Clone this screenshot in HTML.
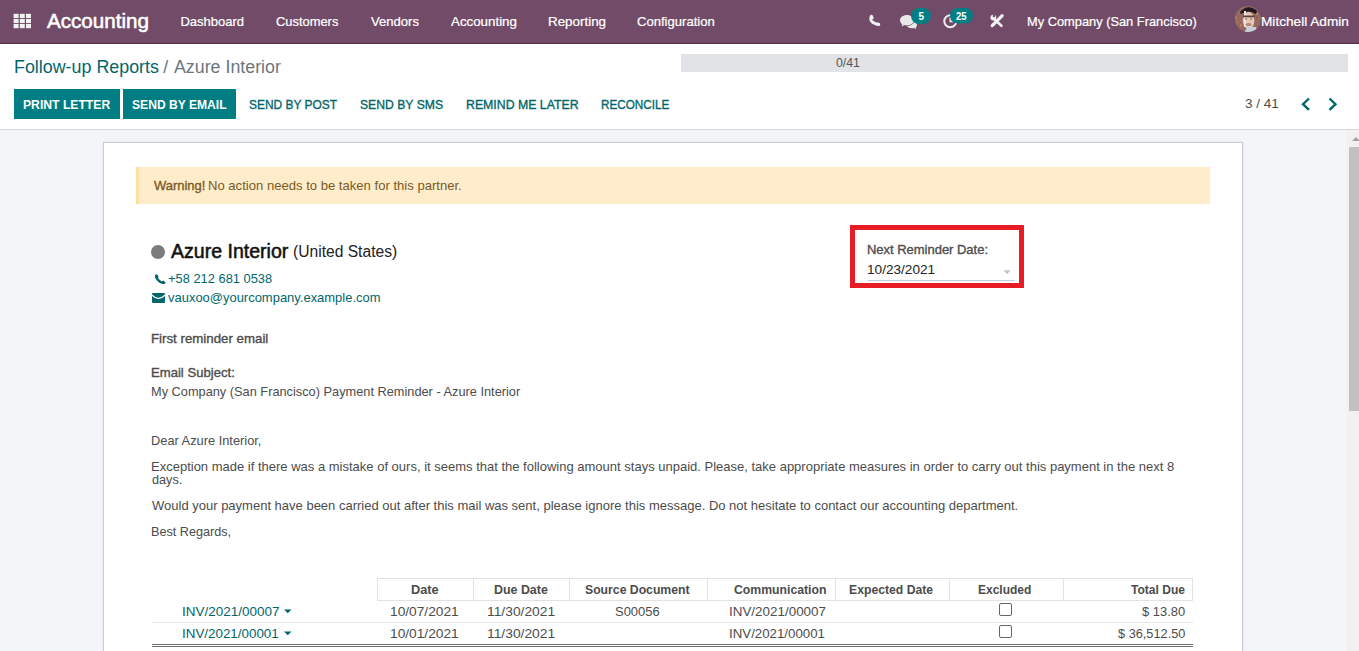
<!DOCTYPE html>
<html><head><meta charset="utf-8"><title>Follow-up Reports</title>
<style>
html,body{margin:0;padding:0;}
body{width:1359px;height:651px;overflow:hidden;position:relative;background:#f4f5f8;font-family:'Liberation Sans', sans-serif;}
.b{position:absolute;}
.t{position:absolute;white-space:pre;line-height:1;font-family:'Liberation Sans', sans-serif;transform-origin:0 0;}
</style></head><body>
<div class="b" style="left:0px;top:0px;width:1359px;height:43px;background:#714B67"></div><div class="b" style="left:0px;top:43px;width:1359px;height:1px;background:#502d45"></div><div class="b" style="left:0px;top:44px;width:1359px;height:85px;background:#ffffff"></div><div class="b" style="left:0px;top:129px;width:1359px;height:1px;background:#d6d8dc"></div><div class="b" style="left:681px;top:54px;width:667px;height:18px;background:#e1e3e6"></div><div class="b" style="left:14px;top:89px;width:106px;height:30px;background:#017e84"></div><div class="b" style="left:123px;top:89px;width:113px;height:30px;background:#017e84"></div><div class="b" style="left:1347px;top:130px;width:12px;height:521px;background:#f1f1f1"></div><div class="b" style="left:1349px;top:147px;width:10px;height:264px;background:#c1c1c1"></div><div class="b" style="left:103px;top:142px;width:1140px;height:518px;background:#fff;border:1px solid #c9ccd2;box-sizing:border-box;box-shadow:0 0 3px rgba(0,0,0,.08)"></div><div class="b" style="left:136px;top:167px;width:1074px;height:37px;background:#feecca;border-left:3px solid #fde0a3;box-sizing:border-box"></div><div class="b" style="left:151px;top:245px;width:14px;height:14px;background:#7b7b7b;border-radius:50%"></div><div class="b" style="left:850px;top:225px;width:174px;height:63px;border:5px solid #e81c25;box-sizing:border-box"></div><div class="b" style="left:868px;top:280px;width:147px;height:1px;background:#c9cdd3"></div><div class="b" style="left:377px;top:578px;width:816px;height:23px;border:1px solid #e2e2e2;box-sizing:border-box"></div><div class="b" style="left:473px;top:578px;width:1px;height:23px;background:#e2e2e2"></div><div class="b" style="left:569px;top:578px;width:1px;height:23px;background:#e2e2e2"></div><div class="b" style="left:707px;top:578px;width:1px;height:23px;background:#e2e2e2"></div><div class="b" style="left:835px;top:578px;width:1px;height:23px;background:#e2e2e2"></div><div class="b" style="left:949px;top:578px;width:1px;height:23px;background:#e2e2e2"></div><div class="b" style="left:1063px;top:578px;width:1px;height:23px;background:#e2e2e2"></div><div class="b" style="left:152px;top:622px;width:1041px;height:1px;background:#e8e8e8"></div><div class="b" style="left:152px;top:644px;width:1041px;height:1px;background:#6e6e6e"></div><div class="b" style="left:152px;top:646px;width:1041px;height:1px;background:#6e6e6e"></div><div class="b" style="left:999px;top:603px;width:13px;height:13px;border:1px solid #666;border-radius:2px;box-sizing:border-box;background:#fff"></div><div class="b" style="left:999px;top:625px;width:13px;height:13px;border:1px solid #666;border-radius:2px;box-sizing:border-box;background:#fff"></div>

<svg class="b" style="left:0;top:0" width="1359" height="651" viewBox="0 0 1359 651">
 <!-- grid icon -->
 <g fill="#f2f2f2">
  <rect x="13.6" y="13.8" width="5" height="4.2"/><rect x="19.8" y="13.8" width="5" height="4.2"/><rect x="26" y="13.8" width="5" height="4.2"/>
  <rect x="13.6" y="18.9" width="5" height="4.2"/><rect x="19.8" y="18.9" width="5" height="4.2"/><rect x="26" y="18.9" width="5" height="4.2"/>
  <rect x="13.6" y="24" width="5" height="4.2"/><rect x="19.8" y="24" width="5" height="4.2"/><rect x="26" y="24" width="5" height="4.2"/>
 </g>
 <!-- phone -->
 <path d="M871.3 16.2 Q868.6 22.6 878.8 24.6" fill="none" stroke="#efefef" stroke-width="2.8" stroke-linecap="round"/>
 <path d="M869.6 16.6 L872.6 15.2 L874 18.6 L871.2 19.6z M875.2 24.6 L877.6 22.2 L880.4 23.8 L879.2 26.2z" fill="#efefef"/>
 <!-- chat bubbles -->
 <path fill="#e9e9e9" d="M907 15 c-4 0 -7 2.3 -7 5.3 c0 1.6 0.9 3 2.3 4 l-0.8 2.2 l3 -1.4 c0.8 0.2 1.6 0.3 2.5 0.3 c4 0 7 -2.3 7 -5.1 c0 -3 -3 -5.3 -7 -5.3z"/>
 <path fill="#e9e9e9" d="M914.5 21.5 c1.5 0.8 2.5 2 2.5 3.4 c0 1 -0.5 1.8 -1.3 2.5 l0.6 1.6 l-2.4 -1 c-0.6 0.1 -1.2 0.2 -1.9 0.2 c-2.2 0 -4 -0.8 -5 -2 c3.5 -0.3 6.5 -2 7.5 -4.7z"/>
 <!-- badge 5 -->
 <rect x="911" y="8" width="20" height="16" rx="8" fill="#017e84"/>
 <!-- activity clock -->
 <circle cx="950.3" cy="21.2" r="6" fill="none" stroke="#ececec" stroke-width="2"/>
 <path d="M950.3 17.5 v4 h3" fill="none" stroke="#ececec" stroke-width="1.6"/>
 <rect x="950" y="8" width="23" height="15.5" rx="7.75" fill="#017e84"/>
 <!-- tools -->
 <path d="M992.2 25.6 L1002.2 15.6" stroke="#f2f2f2" stroke-width="3.2" stroke-linecap="round"/>
 <path d="M994.6 19.4 L1001.4 25.8" stroke="#f2f2f2" stroke-width="2.6" stroke-linecap="round"/>
 <circle cx="993.3" cy="17.6" r="2.9" fill="#f2f2f2"/>
 <circle cx="993.9" cy="16" r="1.2" fill="#714B67"/>
 <!-- avatar -->
 <defs><clipPath id="av"><circle cx="1247.8" cy="19.1" r="13"/></clipPath></defs>
 <g clip-path="url(#av)">
  <rect x="1234" y="5" width="28" height="28" fill="#94695f"/>
  <rect x="1241.2" y="20.1" width="1.6" height="1.6" fill="#a8785e"/><rect x="1258.8" y="18.3" width="1.6" height="1.6" fill="#d49a5a"/><rect x="1256.8" y="12.7" width="1.6" height="1.6" fill="#8a5a5a"/><rect x="1240.0" y="24.6" width="1.6" height="1.6" fill="#d49a5a"/><rect x="1256.7" y="18.4" width="1.6" height="1.6" fill="#9a6a6a"/><rect x="1257.4" y="12.0" width="1.6" height="1.6" fill="#8a5a5a"/><rect x="1257.6" y="19.6" width="1.6" height="1.6" fill="#9a6a6a"/><rect x="1256.4" y="13.0" width="1.6" height="1.6" fill="#d49a5a"/><rect x="1253.7" y="28.8" width="1.6" height="1.6" fill="#9a6a6a"/><rect x="1255.5" y="17.1" width="1.6" height="1.6" fill="#9a6a6a"/><rect x="1255.8" y="17.6" width="1.6" height="1.6" fill="#8a5a5a"/><rect x="1238.5" y="11.6" width="1.6" height="1.6" fill="#9a6a6a"/><rect x="1258.5" y="23.7" width="1.6" height="1.6" fill="#c07a3a"/><rect x="1258.5" y="20.8" width="1.6" height="1.6" fill="#9a6a6a"/><rect x="1238.2" y="18.5" width="1.6" height="1.6" fill="#9a6a6a"/><rect x="1255.8" y="16.7" width="1.6" height="1.6" fill="#8a5a5a"/><rect x="1235.5" y="17.1" width="1.6" height="1.6" fill="#6e4a5a"/><rect x="1251.0" y="7.2" width="1.6" height="1.6" fill="#9a6a6a"/><rect x="1259.0" y="13.3" width="1.6" height="1.6" fill="#8a5a5a"/><rect x="1237.0" y="21.6" width="1.6" height="1.6" fill="#c07a3a"/><rect x="1244.8" y="28.6" width="1.6" height="1.6" fill="#6e4a5a"/><rect x="1259.5" y="19.2" width="1.6" height="1.6" fill="#6e4a5a"/><rect x="1259.3" y="17.4" width="1.6" height="1.6" fill="#a8785e"/><rect x="1235.3" y="16.8" width="1.6" height="1.6" fill="#d49a5a"/><rect x="1250.3" y="9.5" width="1.6" height="1.6" fill="#9a6a6a"/><rect x="1252.6" y="31.0" width="1.6" height="1.6" fill="#a8785e"/>
  <path d="M1240 12 Q1248 3 1257 11 L1256 14 Q1248 9 1241 14z" fill="#231820"/>
  <ellipse cx="1248.6" cy="20.5" rx="5.8" ry="8.5" fill="#e2c9b8"/>
  <rect x="1244" y="11" width="2" height="16" fill="#f0e6e0"/>
  <rect x="1243" y="15.5" width="11.5" height="1.8" fill="#5e4046"/>
  <circle cx="1246" cy="19" r="1" fill="#b07850"/><circle cx="1251" cy="19" r="1" fill="#b07850"/>
  <ellipse cx="1248.5" cy="24.5" rx="3" ry="1.6" fill="#b58670"/>
  <path d="M1244 33 L1247 27 L1256 27 L1258 33z" fill="#c9d0dc"/>
 </g>
 <!-- pager chevrons -->
 <path d="M1309 98.5 l-6 5.7 l6 5.7" fill="none" stroke="#01666b" stroke-width="2.4"/>
 <path d="M1329.5 98.5 l6 5.7 l-6 5.7" fill="none" stroke="#01666b" stroke-width="2.4"/>
 <!-- scrollbar arrow -->
 <path d="M1352 141 l4 -4 l4 4z" fill="#a3a3a3"/>
 <!-- partner phone -->
 <path fill="#01666b" d="M156.5 274 q-2 1 -1.5 3.2 q1.5 4.8 7.5 6.8 q2.3 0.6 3.2 -1.4 l-2.5 -2 q-1 1 -2 0.5 q-2 -1.1 -3 -3 q-0.4 -1 0.5 -1.8 z"/>
 <!-- envelope -->
 <rect x="152" y="293" width="13" height="10" rx="1" fill="#01666b"/>
 <path d="M151.8 295 Q158.5 301.8 165.2 295" fill="none" stroke="#fff" stroke-width="1.1"/>
 <!-- date dropdown triangle -->
 <path d="M1003.3 270.3 h7.5 l-3.75 3.7z" fill="#c0c4cc"/>
 <!-- carets -->
 <path d="M284 609.5 h7.5 l-3.75 3.8z" fill="#01666b"/>
 <path d="M284 631.5 h7.5 l-3.75 3.8z" fill="#01666b"/>
</svg>

<div class="t" style="left:47.0px;top:11px;font-size:20px;font-weight:400;-webkit-text-stroke:0.540px #ffffff;color:#ffffff;transform:scaleX(1.0306);">Accounting</div><div class="t" style="left:180.4px;top:15px;font-size:13px;font-weight:400;-webkit-text-stroke:0.221px #ffffff;color:#ffffff;">Dashboard</div><div class="t" style="left:276.3px;top:15px;font-size:13px;font-weight:400;-webkit-text-stroke:0.221px #ffffff;color:#ffffff;transform:scaleX(0.9921);">Customers</div><div class="t" style="left:371.3px;top:15px;font-size:13px;font-weight:400;-webkit-text-stroke:0.221px #ffffff;color:#ffffff;transform:scaleX(1.0044);">Vendors</div><div class="t" style="left:451.0px;top:15px;font-size:13px;font-weight:400;-webkit-text-stroke:0.221px #ffffff;color:#ffffff;transform:scaleX(1.0250);">Accounting</div><div class="t" style="left:547.8px;top:15px;font-size:13px;font-weight:400;-webkit-text-stroke:0.221px #ffffff;color:#ffffff;transform:scaleX(1.0291);">Reporting</div><div class="t" style="left:637.0px;top:15px;font-size:13px;font-weight:400;-webkit-text-stroke:0.221px #ffffff;color:#ffffff;transform:scaleX(1.0052);">Configuration</div><div class="t" style="left:1027.4px;top:15px;font-size:13px;font-weight:400;-webkit-text-stroke:0.221px #ffffff;color:#ffffff;transform:scaleX(0.9871);">My Company (San Francisco)</div><div class="t" style="left:1261.0px;top:15px;font-size:13px;font-weight:400;-webkit-text-stroke:0.221px #ffffff;color:#ffffff;transform:scaleX(1.0488);">Mitchell Admin</div><div class="t" style="left:918.5px;top:12px;font-size:10px;font-weight:700;color:#ffffff;">5</div><div class="t" style="left:956.0px;top:12px;font-size:10px;font-weight:700;color:#ffffff;transform:scaleX(0.9464);">25</div><div class="t" style="left:14.0px;top:58px;font-size:18px;font-weight:400;color:#01666b;transform:scaleX(0.9924);">Follow-up Reports</div><div class="t" style="left:163.2px;top:58px;font-size:18px;font-weight:400;color:#6c757d;">/</div><div class="t" style="left:174.2px;top:58px;font-size:18px;font-weight:400;color:#6c757d;transform:scaleX(0.9889);">Azure Interior</div><div class="t" style="left:835.8px;top:57px;font-size:12px;font-weight:400;color:#555555;transform:scaleX(1.0263);">0/41</div><div class="t" style="left:23.3px;top:98px;font-size:13px;font-weight:700;color:#ffffff;transform:scaleX(0.9359);">PRINT LETTER</div><div class="t" style="left:132.3px;top:98px;font-size:13px;font-weight:700;color:#ffffff;transform:scaleX(0.9308);">SEND BY EMAIL</div><div class="t" style="left:249.0px;top:98px;font-size:13px;font-weight:400;-webkit-text-stroke:0.351px #01666b;color:#01666b;transform:scaleX(0.9190);">SEND BY POST</div><div class="t" style="left:360.4px;top:98px;font-size:13px;font-weight:400;-webkit-text-stroke:0.351px #01666b;color:#01666b;transform:scaleX(0.9368);">SEND BY SMS</div><div class="t" style="left:466.1px;top:98px;font-size:13px;font-weight:400;-webkit-text-stroke:0.351px #01666b;color:#01666b;transform:scaleX(0.9462);">REMIND ME LATER</div><div class="t" style="left:601.0px;top:98px;font-size:13px;font-weight:400;-webkit-text-stroke:0.351px #01666b;color:#01666b;transform:scaleX(0.9000);">RECONCILE</div><div class="t" style="left:1244.7px;top:97px;font-size:13px;font-weight:400;color:#4c4c4c;transform:scaleX(1.0420);">3 / 41</div><div class="t" style="left:154.0px;top:179px;font-size:13px;font-weight:400;-webkit-text-stroke:0.351px #7a5a1f;color:#7a5a1f;transform:scaleX(0.9962);">Warning!</div><div class="t" style="left:207.5px;top:179px;font-size:13px;font-weight:400;color:#7a5a1f;transform:scaleX(1.0060);">No action needs to be taken for this partner.</div><div class="t" style="left:170.9px;top:241px;font-size:20px;font-weight:400;-webkit-text-stroke:0.540px #111111;color:#111111;transform:scaleX(0.9767);">Azure Interior</div><div class="t" style="left:293.0px;top:244px;font-size:16px;font-weight:400;color:#222222;transform:scaleX(0.9762);">(United States)</div><div class="t" style="left:167.8px;top:272px;font-size:13px;font-weight:400;color:#01666b;transform:scaleX(0.9904);">+58 212 681 0538</div><div class="t" style="left:168.2px;top:291px;font-size:13px;font-weight:400;color:#01666b;transform:scaleX(0.9972);">vauxoo@yourcompany.example.com</div><div class="t" style="left:867.0px;top:243px;font-size:13px;font-weight:400;-webkit-text-stroke:0.351px #4c4c4c;color:#4c4c4c;transform:scaleX(0.9967);">Next Reminder Date:</div><div class="t" style="left:867.0px;top:263px;font-size:13px;font-weight:400;color:#222222;transform:scaleX(1.0469);">10/23/2021</div><div class="t" style="left:151.1px;top:332px;font-size:13px;font-weight:400;-webkit-text-stroke:0.351px #4c4c4c;color:#4c4c4c;transform:scaleX(1.0212);">First reminder email</div><div class="t" style="left:151.0px;top:366px;font-size:13px;font-weight:400;-webkit-text-stroke:0.351px #4c4c4c;color:#4c4c4c;transform:scaleX(1.0086);">Email Subject:</div><div class="t" style="left:151.0px;top:385px;font-size:13px;font-weight:400;color:#4c4c4c;transform:scaleX(0.9827);">My Company (San Francisco) Payment Reminder - Azure Interior</div><div class="t" style="left:151.0px;top:434px;font-size:13px;font-weight:400;color:#4c4c4c;transform:scaleX(0.9855);">Dear Azure Interior,</div><div class="t" style="left:151.0px;top:460px;font-size:13px;font-weight:400;color:#4c4c4c;">Exception made if there was a mistake of ours, it seems that the following amount stays unpaid. Please, take appropriate measures in order to carry out this payment in the next 8</div><div class="t" style="left:152.0px;top:473px;font-size:13px;font-weight:400;color:#4c4c4c;transform:scaleX(0.9767);">days.</div><div class="t" style="left:152.0px;top:499px;font-size:13px;font-weight:400;color:#4c4c4c;">Would your payment have been carried out after this mail was sent, please ignore this message. Do not hesitate to contact our accounting department.</div><div class="t" style="left:151.0px;top:525px;font-size:13px;font-weight:400;color:#4c4c4c;transform:scaleX(0.9726);">Best Regards,</div><div class="t" style="left:411.2px;top:583px;font-size:13px;font-weight:700;color:#4c4c4c;transform:scaleX(0.9818);">Date</div><div class="t" style="left:494.0px;top:583px;font-size:13px;font-weight:700;color:#4c4c4c;transform:scaleX(0.9546);">Due Date</div><div class="t" style="left:585.0px;top:583px;font-size:13px;font-weight:700;color:#4c4c4c;transform:scaleX(0.9400);">Source Document</div><div class="t" style="left:733.9px;top:583px;font-size:13px;font-weight:700;color:#4c4c4c;transform:scaleX(0.9409);">Communication</div><div class="t" style="left:848.8px;top:583px;font-size:13px;font-weight:700;color:#4c4c4c;transform:scaleX(0.9387);">Expected Date</div><div class="t" style="left:978.1px;top:583px;font-size:13px;font-weight:700;color:#4c4c4c;transform:scaleX(0.9216);">Excluded</div><div class="t" style="left:1130.6px;top:583px;font-size:13px;font-weight:700;color:#4c4c4c;transform:scaleX(0.9259);">Total Due</div><div class="t" style="left:182.0px;top:605px;font-size:13px;font-weight:400;color:#01666b;transform:scaleX(1.0366);">INV/2021/00007</div><div class="t" style="left:390.3px;top:605px;font-size:13px;font-weight:400;color:#4c4c4c;transform:scaleX(1.0563);">10/07/2021</div><div class="t" style="left:486.7px;top:605px;font-size:13px;font-weight:400;color:#4c4c4c;transform:scaleX(1.0635);">11/30/2021</div><div class="t" style="left:615.0px;top:605px;font-size:13px;font-weight:400;color:#4c4c4c;transform:scaleX(0.9979);">S00056</div><div class="t" style="left:728.7px;top:605px;font-size:13px;font-weight:400;color:#4c4c4c;transform:scaleX(1.0323);">INV/2021/00007</div><div class="t" style="left:1141.9px;top:605px;font-size:13px;font-weight:400;color:#4c4c4c;transform:scaleX(0.9955);">$ 13.80</div><div class="t" style="left:182.0px;top:627px;font-size:13px;font-weight:400;color:#01666b;transform:scaleX(1.0296);">INV/2021/00001</div><div class="t" style="left:390.3px;top:627px;font-size:13px;font-weight:400;color:#4c4c4c;transform:scaleX(1.0563);">10/01/2021</div><div class="t" style="left:486.7px;top:627px;font-size:13px;font-weight:400;color:#4c4c4c;transform:scaleX(1.0635);">11/30/2021</div><div class="t" style="left:728.7px;top:627px;font-size:13px;font-weight:400;color:#4c4c4c;transform:scaleX(1.0216);">INV/2021/00001</div><div class="t" style="left:1117.6px;top:627px;font-size:13px;font-weight:400;color:#4c4c4c;transform:scaleX(0.9809);">$ 36,512.50</div>
</body></html>
